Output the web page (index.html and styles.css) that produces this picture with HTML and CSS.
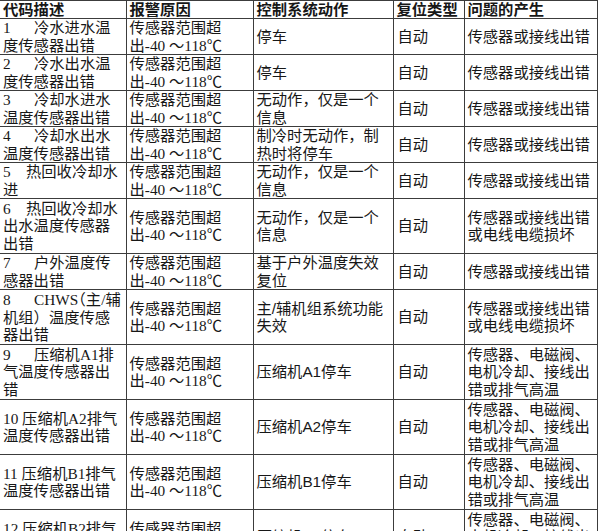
FILE: index.html
```html
<!DOCTYPE html>
<html lang="zh-CN">
<head>
<meta charset="utf-8">
<title>代码描述</title>
<link rel="stylesheet" href="styles.css">
</head>
<body>
<table class="grid">
  <colgroup>
    <col class="c1"><col class="c2"><col class="c3"><col class="c4"><col class="c5">
  </colgroup>
  <thead>
    <tr class="hd">
      <th class="s">代码描述</th>
      <th class="s">报警原因</th>
      <th>控制系统动作</th>
      <th>复位类型</th>
      <th>问题的产生</th>
    </tr>
  </thead>
  <tbody>
    <tr class="r2">
      <td class="s"><span class="num wide">1</span>冷水进水温<br>度传感器出错</td>
      <td class="s">传感器范围超<br>出-40 ～118℃</td>
      <td>停车</td>
      <td class="auto">自动</td>
      <td>传感器或接线出错</td>
    </tr>
    <tr class="r2">
      <td class="s"><span class="num wide">2</span>冷水出水温<br>度传感器出错</td>
      <td class="s">传感器范围超<br>出-40 ～118℃</td>
      <td>停车</td>
      <td class="auto">自动</td>
      <td>传感器或接线出错</td>
    </tr>
    <tr class="r2">
      <td class="s"><span class="num wide">3</span>冷却水进水<br>温度传感器出错</td>
      <td class="s">传感器范围超<br>出-40 ～118℃</td>
      <td>无动作，仅是一个<br>信息</td>
      <td class="auto">自动</td>
      <td>传感器或接线出错</td>
    </tr>
    <tr class="r2">
      <td class="s"><span class="num wide">4</span>冷却水出水<br>温度传感器出错</td>
      <td class="s">传感器范围超<br>出-40 ～118℃</td>
      <td>制冷时无动作，制<br>热时将停车</td>
      <td class="auto">自动</td>
      <td>传感器或接线出错</td>
    </tr>
    <tr class="r2">
      <td class="s"><span class="num mid">5</span>热回收冷却水<br>进</td>
      <td class="s">传感器范围超<br>出-40 ～118℃</td>
      <td>无动作，仅是一个<br>信息</td>
      <td class="auto">自动</td>
      <td>传感器或接线出错</td>
    </tr>
    <tr class="r3">
      <td class="s"><span class="num mid">6</span>热回收冷却水<br>出水温度传感器<br>出错</td>
      <td class="s">传感器范围超<br>出-40 ～118℃</td>
      <td>无动作，仅是一个<br>信息</td>
      <td class="auto">自动</td>
      <td>传感器或接线出错<br>或电线电缆损坏</td>
    </tr>
    <tr class="r2">
      <td class="s"><span class="num wide">7</span>户外温度传<br>感器出错</td>
      <td class="s">传感器范围超<br>出-40 ～118℃</td>
      <td>基于户外温度失效<br>复位</td>
      <td class="auto">自动</td>
      <td>传感器或接线出错</td>
    </tr>
    <tr class="r3">
      <td class="s"><span class="num wide">8</span>CHWS<span class="lp">（</span>主/辅<br>机组）温度传感<br>器出错</td>
      <td class="s">传感器范围超<br>出-40 ～118℃</td>
      <td>主/辅机组系统功能<br>失效</td>
      <td class="auto">自动</td>
      <td>传感器或接线出错<br>或电线电缆损坏</td>
    </tr>
    <tr class="r3">
      <td class="s"><span class="num wide">9</span>压缩机A1排<br>气温度传感器出<br>错</td>
      <td class="s">传感器范围超<br>出-40 ～118℃</td>
      <td>压缩机A1停车</td>
      <td class="auto">自动</td>
      <td>传感器、电磁阀、<br>电机冷却、接线出<br>错或排气高温</td>
    </tr>
    <tr class="r3">
      <td class="s">10 压缩机A2排气<br>温度传感器出错</td>
      <td class="s">传感器范围超<br>出-40 ～118℃</td>
      <td>压缩机A2停车</td>
      <td class="auto">自动</td>
      <td>传感器、电磁阀、<br>电机冷却、接线出<br>错或排气高温</td>
    </tr>
    <tr class="r3">
      <td class="s">11 压缩机B1排气<br>温度传感器出错</td>
      <td class="s">传感器范围超<br>出-40 ～118℃</td>
      <td>压缩机B1停车</td>
      <td class="auto">自动</td>
      <td>传感器、电磁阀、<br>电机冷却、接线出<br>错或排气高温</td>
    </tr>
    <tr class="r3">
      <td class="s">12 压缩机B2排气<br>温度传感器出错</td>
      <td class="s">传感器范围超<br>出-40 ～118℃</td>
      <td>压缩机B2停车</td>
      <td class="auto">自动</td>
      <td>传感器、电磁阀、<br>电机冷却、接线出<br>错或排气高温</td>
    </tr>
  </tbody>
</table>
</body>
</html>
```
FILE: styles.css
```css
html, body {
  margin: 0;
  padding: 0;
  background: #ffffff;
}

.grid {
  border-collapse: collapse;
  table-layout: fixed;
  width: 597px;
  color: #171717;
  font-family: "Liberation Sans", "Noto Sans CJK SC", sans-serif;
  font-size: 15.3px;
}

.c1 { width: 126px; }
.c2 { width: 127px; }
.c3 { width: 140px; }
.c4 { width: 71px; }
.c5 { width: 133px; }

.grid th,
.grid td {
  border: 1px solid #3c3c3c;
  padding: 0 1px 0 3px;
  line-height: 17.5px;
  vertical-align: middle;
  text-align: left;
  white-space: nowrap;
  font-weight: 400;
}

.grid th:first-child,
.grid td:first-child {
  border-left: none;
}

.grid th {
  font-weight: 700;
  height: 17px;
  line-height: 17px;
}

.grid .s {
  font-family: "Liberation Serif", "Noto Sans CJK SC", serif;
}

.r2 td { height: 35px; }
.r3 td { height: 54px; }

.grid td.auto {
  padding-left: 4px;
}

.num {
  display: inline-block;
}
.num.wide { width: 31px; }
.num.mid { width: 23px; }

.lp {
  font-family: "Noto Sans CJK SC", sans-serif;
  font-feature-settings: "halt" 1;
}
```
